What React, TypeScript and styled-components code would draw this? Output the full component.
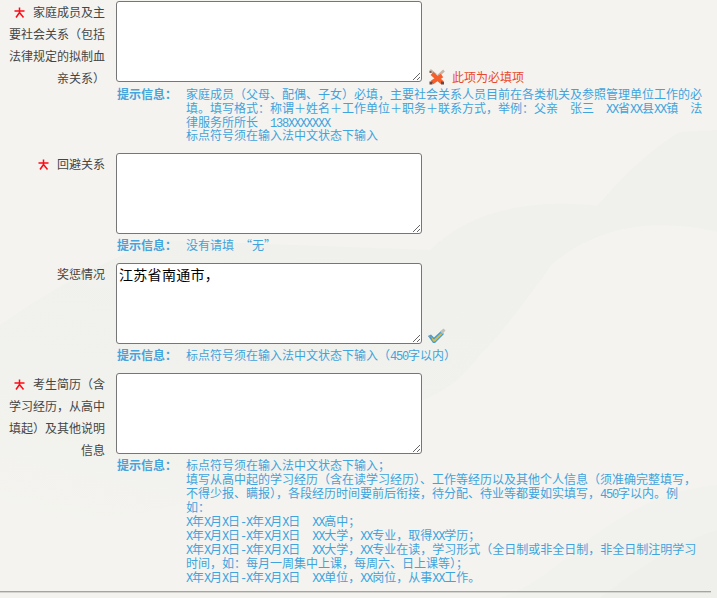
import React from "react";
import styled, { createGlobalStyle } from "styled-components";

const Global = createGlobalStyle`
  html, body { margin: 0; padding: 0; height: 598px; overflow: hidden; background: #f4f3ef; }
  body { font-family: "Noto Sans CJK SC", "Liberation Sans", sans-serif; font-size: 12px; color: #444; }
`;

const Backdrop = styled.svg`
  position: absolute;
  inset: 0;
  width: 717px;
  height: 598px;
  z-index: -1;
`;

const Page = styled.main`
  position: relative;
  z-index: 0;
  width: 717px;
  height: 598px;
  padding-top: 1px;
  box-sizing: border-box;
  overflow: hidden;
`;

const Row = styled.section<{ $flush?: boolean }>`
  display: grid;
  grid-template-columns: 105px 1fr;
  column-gap: 11px;
  margin-bottom: ${(p) => (p.$flush ? "0" : "11px")};
`;

const Label = styled.div`
  text-align: right;
  line-height: 22px;
  color: #454545;
  white-space: pre;
`;

const Star = styled.svg`
  display: inline-block;
  width: 11px;
  height: 11px;
  margin-right: 8px;
  vertical-align: -1px;
`;

const Field = styled.div`
  min-width: 0;
`;

const InputLine = styled.div<{ $tall?: boolean }>`
  display: flex;
  align-items: flex-end;
  min-height: ${(p) => (p.$tall ? "82px" : "81px")};
`;

const Area = styled.textarea`
  align-self: flex-start;
  box-sizing: border-box;
  width: 306px;
  height: 81px;
  margin: 0;
  padding: 2px;
  border: 1px solid #767676;
  border-radius: 3px;
  background: #fff;
  color: #000;
  font-family: "Noto Sans CJK SC", sans-serif;
  font-size: 14px;
  line-height: 17px;
  letter-spacing: 0.3px;
  outline: none;
`;

const ErrorNote = styled.div`
  display: flex;
  align-items: center;
  gap: 6px;
  margin-left: 6px;
  margin-bottom: -2px;
  height: 16px;
  color: #e8492c;
  line-height: 16px;
`;

const OkIcon = styled.svg`
  display: block;
  width: 19px;
  height: 16px;
  margin-left: 5px;
`;

const ErrIcon = styled.svg`
  display: block;
  width: 18px;
  height: 16px;
`;

const Hint = styled.div<{ $dense?: boolean }>`
  display: flex;
  margin-top: 4px;
  padding-left: 1px;
  color: #3fa3dd;
  line-height: ${(p) => (p.$dense ? "13.75px" : "14px")};
`;

const HintTitle = styled.strong`
  flex: 0 0 69px;
  font-weight: 700;
  color: #46a4dc;
`;

const HintBody = styled.div`
  white-space: pre;
`;

const Latin = styled.span`
  font-family: "Liberation Mono", monospace;
  font-size: 12px;
  letter-spacing: -1.2px;
  line-height: 0;
`;

const Divider = styled.hr`
  width: 711px;
  margin: 7px 0 0;
  border: 0;
  border-top: 1px solid #a4a4a0;
  border-bottom: 1px solid #d4d4d0;
`;

function Mixed({ text }: { text: string }) {
  const parts = text.split(/([A-Za-z0-9 \-]+)/);
  return (
    <>
      {parts.map((part, i) => (i % 2 === 1 ? <Latin key={i}>{part}</Latin> : part))}
    </>
  );
}

function HintBlock({ lines, dense }: { lines: string[]; dense?: boolean }) {
  return (
    <Hint $dense={dense}>
      <HintTitle>提示信息：</HintTitle>
      <HintBody>
        {lines.map((line, i) => (
          <div key={i}>
            <Mixed text={line} />
          </div>
        ))}
      </HintBody>
    </Hint>
  );
}

function Required() {
  return (
    <Star viewBox="0 0 11 11" aria-hidden="true">
      <path
        d="M5.5 .5 L5.5 6 M.5 4 H10.5 M5.5 5.5 L2 10.5 M5.5 5.5 L9.5 10.5"
        fill="none"
        stroke="#ff0a14"
        strokeWidth="1.5"
      />
    </Star>
  );
}

function CrossIcon() {
  return (
    <ErrIcon viewBox="0 0 18 16" aria-hidden="true">
      <path d="M2 1 L8 6 M10 7 L16 1.5" fill="none" stroke="#c4b6a8" strokeWidth="2.6" />
      <path d="M4 4.5 L14 13.5 M14 6.5 L4 13.5" fill="none" stroke="#f4602c" strokeWidth="4.2" />
      <path d="M1.5 12.5 h3 v3 h-3 Z M13 12.5 h3 v3 h-3 Z" fill="#6e4640" />
      <path d="M1.5 2 h2 v2 h-2 Z" fill="#7d6258" />
    </ErrIcon>
  );
}

function CheckIcon() {
  return (
    <OkIcon viewBox="0 0 19 16" aria-hidden="true">
      <path d="M1 8 L4 6.5 L7 9.5 L14 3 L17 6 L8 15 L6 15 Z" fill="#3f9fd4" />
      <path d="M4 8.5 L7 11.5 L14 5 L15.2 6.2 L8 13.5 L6 13.5 Z" fill="#e6b93a" />
      <path d="M13 3.5 L16.5 .5 L18.5 2.5 L15.5 6 Z" fill="#c3c0b4" />
      <path d="M1 8 L3 7.5 L4 9 L2.5 9.5 Z" fill="#8a9aa4" />
    </OkIcon>
  );
}

export default function App() {
  return (
    <>
      <Global />
      <Page lang="zh-CN">
        <Backdrop viewBox="0 0 717 598" aria-hidden="true">
          <defs>
            <linearGradient id="band" x1="0.6" y1="0.2" x2="0.2" y2="1">
              <stop offset="0" stopColor="#f0f1ec" />
              <stop offset="0.6" stopColor="#f1f2ed" />
              <stop offset="1" stopColor="#f4f3ef" />
            </linearGradient>
          </defs>
          <path d="M430 250 C470 210 530 200 590 205 C640 210 680 225 717 232 L717 231 C670 222 630 222 590 240 C540 262 510 310 480 355 C465 375 450 388 430 397 C380 420 300 470 200 500 C120 520 50 530 0 540 L0 325 C50 290 100 262 160 240 Z" fill="url(#band)" />
          <path d="M717 130 L680 132 C640 155 600 200 570 240 C540 280 510 325 480 355 C510 310 540 262 590 240 C630 222 670 222 717 231 Z" fill="#f0f1ec" />
          <path d="M717 485 C660 490 610 520 570 555 C545 575 525 590 500 598 L717 598 Z" fill="#f1f2ed" />
          <path d="M717 530 C670 545 630 575 600 598 L717 598 Z" fill="#eff0eb" />
        </Backdrop>

        <Row>
          <Label>
            <Required />
            {"家庭成员及主\n要社会关系（包括\n法律规定的拟制血\n亲关系）"}
          </Label>
          <Field>
            <InputLine $tall>
              <Area />
              <ErrorNote>
                <CrossIcon />
                此项为必填项
              </ErrorNote>
            </InputLine>
            <HintBlock
              dense
              lines={[
                "家庭成员（父母、配偶、子女）必填，主要社会关系人员目前在各类机关及参照管理单位工作的必",
                "填。填写格式：称谓＋姓名＋工作单位＋职务＋联系方式，举例：父亲  张三  XX省XX县XX镇  法",
                "律服务所所长  138XXXXXXX",
                "标点符号须在输入法中文状态下输入",
              ]}
            />
          </Field>
        </Row>

        <Row>
          <Label>
            <Required />
            回避关系
          </Label>
          <Field>
            <InputLine>
              <Area />
            </InputLine>
            <HintBlock lines={["没有请填 “无” "]} />
          </Field>
        </Row>

        <Row>
          <Label>奖惩情况</Label>
          <Field>
            <InputLine>
              <Area defaultValue="江苏省南通市，" />
              <CheckIcon />
            </InputLine>
            <HintBlock lines={["标点符号须在输入法中文状态下输入（450字以内）"]} />
          </Field>
        </Row>

        <Row $flush>
          <Label>
            <Required />
            {"考生简历（含\n学习经历，从高中\n填起）及其他说明\n信息"}
          </Label>
          <Field>
            <InputLine>
              <Area />
            </InputLine>
            <HintBlock
              lines={[
                "标点符号须在输入法中文状态下输入；",
                "填写从高中起的学习经历（含在读学习经历）、工作等经历以及其他个人信息（须准确完整填写，",
                "不得少报、瞒报），各段经历时间要前后衔接，待分配、待业等都要如实填写，450字以内。例",
                "如：",
                "X年X月X日-X年X月X日  XX高中；",
                "X年X月X日-X年X月X日  XX大学，XX专业，取得XX学历；",
                "X年X月X日-X年X月X日  XX大学，XX专业在读，学习形式（全日制或非全日制，非全日制注明学习",
                "时间，如：每月一周集中上课，每周六、日上课等）；",
                "X年X月X日-X年X月X日  XX单位，XX岗位，从事XX工作。",
              ]}
            />
          </Field>
        </Row>
        <Divider />
      </Page>
    </>
  );
}
